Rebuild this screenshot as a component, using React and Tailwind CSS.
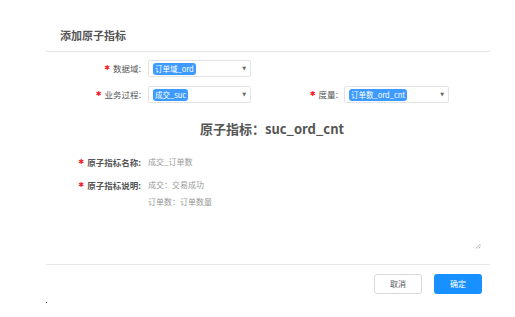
import React from "react";

const font = { fontFamily: '"Noto Sans CJK SC", "Noto Sans", sans-serif' };

function Star() {
  return (
    <span className="text-[#f5222d] text-[7px] mr-[3px] leading-none" style={{ fontFamily: '"DejaVu Sans", sans-serif' }}>
      ✱
    </span>
  );
}

function Label({ children, className = "" }) {
  return (
    <div className={`flex items-center justify-end text-[8.5px] text-[#555] ${className}`}>
      <Star />
      <span>{children}:</span>
    </div>
  );
}

function Select({ tag, width }) {
  return (
    <div className={`${width} h-[17px] border border-[#e3e3e3] rounded-[2px] flex items-center justify-between pl-[4px] pr-[4px] bg-white`}>
      <span className="h-[12px] bg-[#3d9bff] text-white text-[7.5px] leading-[12px] px-[2px] rounded-[3px] whitespace-nowrap">{tag}</span>
      <span className="text-[#666] text-[5px] leading-none" style={{ fontFamily: '"DejaVu Sans", sans-serif' }}>▼</span>
    </div>
  );
}

export default function App() {
  return (
    <div className="w-[515px] h-[317px] bg-white overflow-hidden" style={font}>
      <div className="ml-[46px] w-[444px]">
        <div className="h-[52px] border-b border-[#e6e6e6] flex items-end pb-[8px] pl-[14px]">
          <span className="text-[11px] leading-[16px] font-bold text-[#555]">添加原子指标</span>
        </div>
        <div className="pt-[8px]">
          <div className="flex items-center h-[17px]">
            <Label className="w-[95px]">数据域</Label>
            <div className="w-[7px]" />
            <Select tag="订单域_ord" width="w-[103px]" />
          </div>
          <div className="flex items-center h-[17px] mt-[9px]">
            <Label className="w-[95px]">业务过程</Label>
            <div className="w-[7px]" />
            <Select tag="成交_suc" width="w-[103px]" />
            <Label className="w-[87px]">度量</Label>
            <div className="w-[6px]" />
            <Select tag="订单数_ord_cnt" width="w-[105px]" />
          </div>
          <div className="mt-[17px] pl-[154px] text-[13px] leading-[18px] font-bold text-[#555] whitespace-nowrap">
            原子指标：suc_ord_cnt
          </div>
          <div className="flex items-center mt-[18px] h-[12px]">
            <Label className="w-[95px] font-bold">原子指标名称</Label>
            <div className="w-[7px]" />
            <span className="text-[8px] text-[#999]">成交_订单数</span>
          </div>
          <div className="flex mt-[11px]">
            <Label className="w-[95px] font-bold h-[12px] self-start">原子指标说明</Label>
            <div className="w-[7px]" />
            <div className="flex-1 h-[83px] relative text-[8px] text-[#999] leading-[12px]">
              <div>成交：交易成功</div>
              <div className="mt-[5px]">订单数：订单数量</div>
              <svg className="absolute right-[9px] bottom-[13px]" width="6" height="6" viewBox="0 0 6 6">
                <path d="M5.5 1 L1 5.5 M5.5 3.5 L3.5 5.5" stroke="#999" strokeWidth="0.8" />
              </svg>
            </div>
          </div>
        </div>
        <div className="border-t border-[#e6e6e6] mt-[2px] flex justify-end gap-[12px] pr-[8px] pt-[9px]">
          <button className="w-[48px] h-[20px] border border-[#d9d9d9] rounded-[3px] text-[8px] text-[#555] bg-white">取消</button>
          <button className="w-[48px] h-[20px] rounded-[3px] text-[8px] text-white bg-[#1890ff]">确定</button>
        </div>
        <div className="mt-[8px] w-[1px] h-[1px] bg-[#555]" />
      </div>
    </div>
  );
}
